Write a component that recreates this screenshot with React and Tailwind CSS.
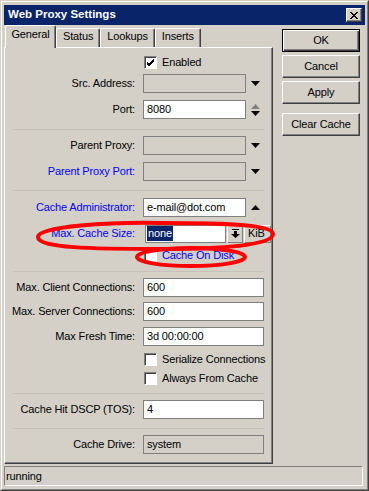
const Down = () => (
  <svg width="9" height="5" viewBox="0 0 9 5">
    <polygon points="0,0 9,0 4.5,5" fill="#000" />
  </svg>
);

const Up = ({ color = "#000" }) => (
  <svg width="9" height="5" viewBox="0 0 9 5">
    <polygon points="0,5 9,5 4.5,0" fill={color} />
  </svg>
);

const Check = ({ checked }) => (
  <div className="flex h-[13px] w-[13px] items-center justify-center border border-t-[#808080] border-l-[#808080] border-r-white border-b-white bg-white shadow-[inset_1px_1px_#404040]">
    {checked && (
      <svg width="9" height="9" viewBox="0 0 9 9">
        <path d="M1 4 L3 6 L8 1 M1 5 L3 7 L8 2 M1 6 L3 8 L8 3" stroke="#000" strokeWidth="1" fill="none" />
      </svg>
    )}
  </div>
);

const Box = ({ value, wide, disabled, children }) => (
  <div
    className={`flex h-[19px] items-center border border-[#7f7f7f] pl-[3px] ${
      wide ? "w-[121px]" : "w-[103px]"
    } ${disabled ? "bg-[#d4d0c8]" : "bg-white"}`}
  >
    {children ?? value}
  </div>
);

const Row = ({ label, blue, className = "", children }) => (
  <div className={`flex h-[19px] items-center ${className}`}>
    <div className={`w-[132px] pr-[2px] text-right ${blue ? "text-[#0000ff]" : "text-black"}`}>
      {label}
    </div>
    <div className="ml-[6px] flex items-center">{children}</div>
  </div>
);

const CheckRow = ({ label, checked, blue, className = "" }) => (
  <div className={`flex h-[13px] items-center pl-[139px] ${className}`}>
    <Check checked={checked} />
    <span className={`ml-[5px] ${blue ? "text-[#0000ff]" : "text-black"}`}>{label}</span>
  </div>
);

const Sep = ({ className = "" }) => (
  <div className={`ml-[8px] h-px w-[251px] bg-[#c6c2ba] ${className}`} />
);

const Arrow = ({ children }) => (
  <div className="flex w-[19px] flex-col items-center justify-center gap-[2px]">{children}</div>
);

const Button = ({ label, def, className = "" }) => (
  <div
    className={`flex h-[23px] w-[78px] items-center justify-center bg-[#d4d0c8] ${
      def
        ? "border border-black shadow-[inset_1px_1px_#fff,inset_-1px_-1px_#404040,inset_-2px_-2px_#808080]"
        : "border border-t-white border-l-white border-r-[#404040] border-b-[#404040] shadow-[inset_-1px_-1px_#808080]"
    } ${className}`}
  >
    {label}
  </div>
);

const Tab = ({ label, active }) =>
  active ? (
    <div className="relative z-10 -mb-px flex h-[23px] w-[51px] items-start justify-center rounded-t-[2px] border border-b-0 border-t-white border-l-white border-r-[#404040] bg-[#d4d0c8] pt-[3px] shadow-[inset_-1px_0_#808080]">
      {label}
    </div>
  ) : (
    <div className="flex h-[19px] items-start justify-center rounded-t-[2px] border border-b-0 border-t-white border-l-white border-r-[#404040] bg-[#d4d0c8] px-[6px] pt-[2px] shadow-[inset_-1px_0_#808080]">
      {label}
    </div>
  );

export default function App() {
  return (
    <div className="relative h-[491px] w-[369px] overflow-hidden border border-t-[#d4d0c8] border-l-[#d4d0c8] border-r-[#404040] border-b-[#404040] bg-[#d4d0c8] font-['Liberation_Sans',Arial,sans-serif] text-[11px] leading-none tracking-[-0.15px] text-black">
      <div className="h-full w-full border border-t-white border-l-white border-r-[#808080] border-b-[#808080] px-[2px] pt-[3px]">
        {/* title bar */}
        <div className="flex h-[20px] items-center justify-between bg-[#0a246a] pl-[4px] pr-[3px]">
          <span className="text-[11.5px] font-bold tracking-normal text-white">Web Proxy Settings</span>
          <div className="flex h-[14px] w-[16px] items-center justify-center border border-t-white border-l-white border-r-[#404040] border-b-[#404040] bg-[#d4d0c8] shadow-[inset_-1px_-1px_#808080]">
            <svg width="8" height="7" viewBox="0 0 8 7">
              <path d="M0 0 L7 7 M1 0 L8 7 M7 0 L0 7 M8 0 L1 7" stroke="#000" strokeWidth="1" />
            </svg>
          </div>
        </div>

        <div className="flex">
          {/* left: tabs + panel */}
          <div className="w-[269px]">
            <div className="flex h-[22px] items-end pl-px">
              <Tab label="General" active />
              <Tab label="Status" />
              <Tab label="Lookups" />
              <Tab label="Inserts" />
            </div>
            <div className="h-[417px] border border-t-white border-l-white border-r-[#404040] border-b-[#404040] shadow-[inset_-1px_-1px_#808080]">
              <CheckRow label="Enabled" checked className="mt-[8px]" />
              <Row label="Src. Address:" className="mt-[5px]">
                <Box disabled />
                <Arrow>
                  <Down />
                </Arrow>
              </Row>
              <Row label="Port:" className="mt-[7px]">
                <Box value="8080" />
                <Arrow>
                  <Up color="#808080" />
                  <Down />
                </Arrow>
              </Row>
              <Sep className="mt-[10px]" />
              <Row label="Parent Proxy:" className="mt-[6px]">
                <Box disabled />
                <Arrow>
                  <Down />
                </Arrow>
              </Row>
              <Row label="Parent Proxy Port:" blue className="mt-[7px]">
                <Box disabled />
                <Arrow>
                  <Down />
                </Arrow>
              </Row>
              <Sep className="mt-[9px]" />
              <Row label="Cache Administrator:" blue className="mt-[7px]">
                <Box value="e-mail@dot.com" />
                <Arrow>
                  <Up />
                </Arrow>
              </Row>
              <Row label="Max. Cache Size:" blue className="mt-[7px]">
                <div className="ml-[2px] flex h-[18px] w-[81px] items-center border border-[#7f7f7f] bg-white pl-px">
                  <span className="bg-[#0a246a] px-px py-[2px] text-white">none</span>
                </div>
                <div className="ml-[1px] flex h-[18px] w-[16px] items-center justify-center border border-t-white border-l-white border-r-[#808080] border-b-[#808080]">
                  <svg width="9" height="9" viewBox="0 0 9 9">
                    <rect x="1" y="0" width="7" height="1" fill="#000" />
                    <rect x="3" y="2" width="3" height="3" fill="#000" />
                    <polygon points="0,5 9,5 4.5,9" fill="#000" />
                  </svg>
                </div>
                <div className="ml-px flex h-[18px] w-[27px] items-center border border-t-white border-l-white border-r-[#808080] border-b-[#808080] pl-[3px]">
                  KiB
                </div>
              </Row>
              <CheckRow label="Cache On Disk" blue className="mt-[6px]" />
              <Sep className="mt-[9px]" />
              <Row label="Max. Client Connections:" className="mt-[6px]">
                <Box value="600" wide />
              </Row>
              <Row label="Max. Server Connections:" className="mt-[5px]">
                <Box value="600" wide />
              </Row>
              <Row label="Max Fresh Time:" className="mt-[6px]">
                <Box value="3d 00:00:00" wide />
              </Row>
              <CheckRow label="Serialize Connections" className="mt-[7px]" />
              <CheckRow label="Always From Cache" className="mt-[6px]" />
              <Sep className="mt-[8px]" />
              <Row label="Cache Hit DSCP (TOS):" className="mt-[6px]">
                <Box value="4" wide />
              </Row>
              <Sep className="mt-[9px]" />
              <Row label="Cache Drive:" className="mt-[6px]">
                <Box value="system" wide disabled />
              </Row>
            </div>
          </div>

          {/* right: buttons */}
          <div className="ml-[9px] mt-[4px] flex flex-col">
            <Button label="OK" def />
            <Button label="Cancel" className="mt-[3px]" />
            <Button label="Apply" className="mt-[3px]" />
            <Button label="Clear Cache" className="mt-[9px]" />
          </div>
        </div>

        {/* status bar */}
        <div className="mt-[2px] flex h-[20px] w-[359px] items-center border border-t-[#808080] border-l-[#808080] border-r-white border-b-white pl-[1px]">
          running
        </div>
      </div>

      {/* red annotation loops */}
      <svg className="pointer-events-none absolute left-0 top-0" width="369" height="491">
        <path
          d="M37 236 C37 225 110 221 160 222 C232 222 272 224 272 233 C272 244 222 248 160 248 C92 248 37 247 37 236 Z"
          fill="none"
          stroke="#ff0000"
          strokeWidth="4"
        />
        <ellipse cx="190" cy="256" rx="54" ry="9" fill="none" stroke="#ff0000" strokeWidth="4" />
      </svg>
    </div>
  );
}
